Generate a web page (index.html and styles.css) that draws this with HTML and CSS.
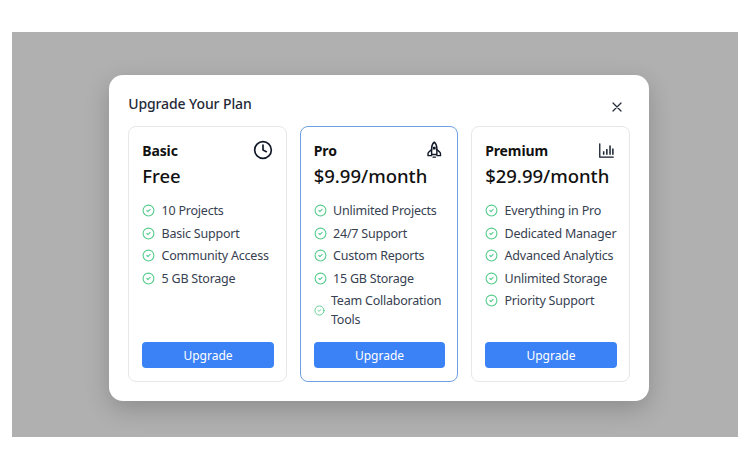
FILE: index.html
```html
<!DOCTYPE html>
<html lang="en">
<head>
<meta charset="utf-8">
<title>Upgrade Your Plan</title>
<link rel="stylesheet" href="styles.css">
</head>
<body>
<svg class="sprite" width="0" height="0" aria-hidden="true">
  <symbol id="check" viewBox="0 0 24 24"><circle cx="12" cy="12" r="10"/><path d="m9 12 2 2 4-4"/></symbol>
</svg>
<main class="backdrop">
  <section class="modal">
    <header class="modal-head">
      <h2 class="modal-title">Upgrade Your Plan</h2>
      <button class="close" type="button" aria-label="Close">
        <svg viewBox="0 0 24 24" class="close-icon"><path d="M18 6 6 18M6 6l12 12"/></svg>
      </button>
    </header>
    <div class="plans">
      <article class="plan">
        <div class="plan-head">
          <h3 class="plan-name">Basic</h3>
          <svg viewBox="0 0 24 24" class="plan-icon"><circle cx="12" cy="12" r="10"/><path d="M12 6v6l4 2"/></svg>
        </div>
        <p class="price">Free</p>
        <ul class="features">
          <li class="feature"><svg class="check"><use href="#check"/></svg><span>10 Projects</span></li>
          <li class="feature"><svg class="check"><use href="#check"/></svg><span>Basic Support</span></li>
          <li class="feature"><svg class="check"><use href="#check"/></svg><span>Community Access</span></li>
          <li class="feature"><svg class="check"><use href="#check"/></svg><span>5 GB Storage</span></li>
        </ul>
        <button class="upgrade" type="button">Upgrade</button>
      </article>
      <article class="plan plan-featured">
        <div class="plan-head">
          <h3 class="plan-name">Pro</h3>
          <svg viewBox="1 0 24 24" class="plan-icon plan-icon-thin"><path d="M12 1.500C9.500 3.500 8.500 6.500 8.500 10v8h7v-8c0-3.500-1-6.500-3.500-8.500Z"/><path d="M8.500 11.500 4.500 15c-.6.6-.8 1.200-.8 2v2.500h4.800M15.500 11.500l4 3.500c.6.6.8 1.200.8 2v2.500h-4.800"/><rect x="11" y="8.500" width="2" height="2"/><path d="M10.500 21.500h3"/></svg>
        </div>
        <p class="price">$9.99/month</p>
        <ul class="features">
          <li class="feature"><svg class="check"><use href="#check"/></svg><span>Unlimited Projects</span></li>
          <li class="feature"><svg class="check"><use href="#check"/></svg><span>24/7 Support</span></li>
          <li class="feature"><svg class="check"><use href="#check"/></svg><span>Custom Reports</span></li>
          <li class="feature"><svg class="check"><use href="#check"/></svg><span>15 GB Storage</span></li>
          <li class="feature"><svg class="check"><use href="#check"/></svg><span>Team Collaboration Tools</span></li>
        </ul>
        <button class="upgrade" type="button">Upgrade</button>
      </article>
      <article class="plan">
        <div class="plan-head">
          <h3 class="plan-name">Premium</h3>
          <svg viewBox="0 0 24 24" class="plan-icon plan-icon-chart"><path d="M2.500 2.500v19h19"/><path d="M8 18v-5M12.500 18v-8M17 18V5M21 18V9" class="bars"/></svg>
        </div>
        <p class="price">$29.99/month</p>
        <ul class="features">
          <li class="feature"><svg class="check"><use href="#check"/></svg><span>Everything in Pro</span></li>
          <li class="feature"><svg class="check"><use href="#check"/></svg><span>Dedicated Manager</span></li>
          <li class="feature"><svg class="check"><use href="#check"/></svg><span>Advanced Analytics</span></li>
          <li class="feature"><svg class="check"><use href="#check"/></svg><span>Unlimited Storage</span></li>
          <li class="feature"><svg class="check"><use href="#check"/></svg><span>Priority Support</span></li>
        </ul>
        <button class="upgrade" type="button">Upgrade</button>
      </article>
    </div>
  </section>
</main>
</body>
</html>
```
FILE: styles.css
```css
* { box-sizing: border-box; }
html, body { margin: 0; height: 100%; }
body {
  background: #fff;
  padding: 32px 12px;
  font-family: "Noto Sans", "Open Sans", sans-serif;
  color: #111827;
}
.sprite { position: absolute; }
.backdrop {
  height: 405px;
  background: #b0b0b0;
  display: flex;
  align-items: center;
  justify-content: center;
  padding: 7px 0 0 8px;
}
.modal {
  width: 540px;
  height: 326px;
  background: #fff;
  border-radius: 14px;
  padding: 19.2px;
  display: flex;
  flex-direction: column;
  box-shadow: 0 8px 24px rgba(0, 0, 0, 0.2);
}
.modal-head {
  display: flex;
  justify-content: space-between;
  align-items: center;
  height: 20px;
  margin-bottom: 12px;
}
.modal-title { margin: -1px 0 0; font-size: 14px; letter-spacing: -0.1px; font-weight: 500; color: #1f2937; }
.close {
  border: 0; background: none; padding: 0;
  width: 16px; height: 16px; margin: 5px 5px 0 0;
  display: flex;
}
.close-icon { width: 16px; height: 16px; fill: none; stroke: #1f2937; stroke-width: 1.800; stroke-linecap: round; }
.plans {
  flex: 1;
  min-height: 0;
  display: grid;
  grid-template-columns: repeat(3, 1fr);
  gap: 12.8px;
}
.plan {
  border: 1px solid #e5e7eb;
  border-radius: 8px;
  padding: 12px 12px 12.5px 13px;
  display: flex;
  flex-direction: column;
  min-height: 0;
}
.plan-featured { border-color: #6f9fe0; }
.plan-head { display: flex; justify-content: space-between; align-items: center; height: 22px; padding-right: 1px; }
.plan-name { margin: 0; font-size: 14px; font-weight: 700; letter-spacing: -0.1px; color: #111; }
.plan-icon {
  width: 20px; height: 20px; flex: none;
  fill: none; stroke: #111827; stroke-width: 2; stroke-linecap: round; stroke-linejoin: round;
}
.plan-icon-thin { width: 18px; height: 18px; stroke-width: 1.900; }
.plan-icon-chart { width: 17px; height: 17px; margin-right: 1px; stroke-width: 1.800; stroke: #111827; }
.bars { stroke-width: 2.200; stroke: #1f2937; stroke-linecap: butt; }
.price { margin: 2px 0 12px; font-size: 18.500px; line-height: 26px; font-weight: 500; color: #111; }
.features { list-style: none; margin: 0; padding: 0; display: flex; flex-direction: column; gap: 3.500px; flex: 1; min-height: 0; }
.feature { display: flex; align-items: center; gap: 6.400px; font-size: 12.500px; letter-spacing: -0.22px; line-height: 19px; color: #374151; }
.check { width: 13px; height: 13px; flex-shrink: 0.8; fill: none; stroke: #55cc8c; stroke-width: 2; stroke-linecap: round; stroke-linejoin: round; }
.upgrade {
  height: 26px;
  flex: none;
  border: 0;
  border-radius: 4px;
  background: #3b82f6;
  color: #fff;
  font: 400 12px "Noto Sans", "Open Sans", sans-serif;
}
```
